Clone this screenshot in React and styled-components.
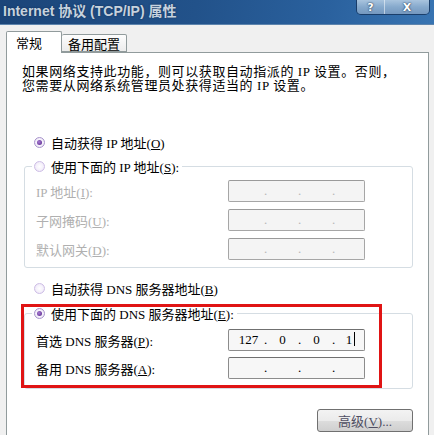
import React from 'react';
import styled, { createGlobalStyle } from 'styled-components';

const GlobalStyle = createGlobalStyle`
  html, body {
    margin: 0;
    padding: 0;
    background: #f0f0f0;
  }
`;

const Window = styled.div`
  width: 434px;
  height: 435px;
  overflow: hidden;
  display: flex;
  flex-direction: column;
  background: #f0f0f0;
  font-family: "Liberation Serif", "Noto Sans CJK SC", serif;
  font-size: 13px;
  color: #000;
`;

const TitleBar = styled.div`
  height: 24px;
  flex: none;
  display: flex;
  align-items: flex-start;
  padding: 0 4px 0 3px;
  background: linear-gradient(100deg, #1b4579 0%, #22528a 45%, #2a619e 75%, #3874b2 100%);
  border-bottom: 1px solid #5d84ad;
`;

const Title = styled.div`
  line-height: 22px;
  font-family: "Liberation Sans", "Noto Sans CJK SC", sans-serif;
  font-weight: bold;
  font-size: 14px;
  color: #c6d2de;
  text-shadow: 0 0 2px rgba(10, 30, 60, 0.6);
  white-space: nowrap;
`;

const CaptionButtons = styled.div`
  margin-left: auto;
  display: flex;
  height: 14px;
  border: 1px solid rgba(20, 50, 90, 0.8);
  border-top: none;
  border-radius: 0 0 5px 5px;
  overflow: hidden;
`;

const CaptionButton = styled.div`
  width: ${p => p.$wide ? 44 : 27}px;
  display: flex;
  align-items: center;
  justify-content: center;
  background: linear-gradient(180deg, #a9c4de 0%, #86a9cc 50%, #7598bf 100%);
  border-left: ${p => p.$wide ? '1px solid rgba(255,255,255,0.5)' : 'none'};
  font-family: "DejaVu Sans", sans-serif;
  font-weight: bold;
  font-size: 11px;
  color: #fff;
  text-shadow: 0 0 2px #2a3f5a, 0 0 1px #2a3f5a;
`;

const Body = styled.div`
  flex: 1;
  display: flex;
  flex-direction: column;
  padding: 6px 5px 0 6px;
  min-height: 0;
`;

const TabStrip = styled.div`
  display: flex;
  align-items: flex-end;
  height: 21px;
  position: relative;
  z-index: 1;
`;

const Tab = styled.div`
  box-sizing: border-box;
  width: ${p => p.$width}px;
  height: ${p => p.$active ? 22 : 18}px;
  margin-bottom: ${p => p.$active ? -1 : 0}px;
  padding-left: ${p => p.$active ? 9 : 6}px;
  display: flex;
  align-items: center;
  border: 1px solid #919b9c;
  border-bottom: ${p => p.$active ? 'none' : '1px solid #919b9c'};
  border-left: ${p => p.$active ? '1px solid #919b9c' : 'none'};
  border-radius: 2px 2px 0 0;
  background: ${p => p.$active ? '#fff' : 'linear-gradient(180deg, #fdfdfd 0%, #ececec 100%)'};
  font-family: "Noto Sans CJK SC", sans-serif;
  font-size: 13px;
`;

const Panel = styled.div`
  flex: 1;
  background: #fff;
  border: 1px solid #919b9c;
  padding: 12px 15px 20px 17px;
  display: flex;
  flex-direction: column;
`;

const Intro = styled.p`
  margin: 0 0 0 -2px;
  line-height: 14px;
  letter-spacing: 0.6px;
  white-space: nowrap;
`;

const RadioRow = styled.div`
  display: flex;
  align-items: center;
  gap: 6px;
  height: 16px;
  margin-top: ${p => p.$top || 0}px;
  padding-left: 10px;
  color: ${p => p.$disabled ? '#a8a8a8' : '#000'};
`;

const Radio = styled.span`
  box-sizing: border-box;
  width: 11px;
  height: 11px;
  border-radius: 50%;
  border: 1px solid ${p => p.$checked ? '#a894cc' : '#cdbde6'};
  background: radial-gradient(circle at 50% 50%, #ffffff 0%, #f4effa 60%, #e2d8f0 100%);
  display: flex;
  align-items: center;
  justify-content: center;

  &::after {
    content: '';
    width: 5px;
    height: 5px;
    border-radius: 50%;
    background: radial-gradient(circle at 40% 40%, #a87ad4 0%, #6b3c9c 70%, #4e2778 100%);
    display: ${p => p.$checked ? 'block' : 'none'};
  }
`;

const GroupWrap = styled.div`
  position: relative;
  margin-top: ${p => p.$top}px;
`;

const GroupBox = styled.div`
  border: 1px solid #d5dde3;
  border-radius: 3px;
  padding: 0 0 ${p => p.$bottom}px 11px;
`;

const Legend = styled(RadioRow)`
  width: fit-content;
  margin: -9px 0 0 -4px;
  padding: 0 3px 0 2px;
  background: #fff;
`;

const Rows = styled.div`
  display: grid;
  grid-template-columns: 192px 137px;
  row-gap: ${p => p.$gap}px;
  margin-top: ${p => p.$top}px;
  align-items: center;
`;

const FieldLabel = styled.span`
  color: ${p => p.$disabled ? '#b0b0b0' : '#000'};
  white-space: nowrap;
`;

const IpBox = styled.div`
  box-sizing: border-box;
  width: 137px;
  height: 22px;
  padding-left: 5px;
  border: 1px solid ${p => p.$disabled ? '#a6a6a6' : '#8c8c8c'};
  border-top-color: ${p => p.$disabled ? '#9a9a9a' : '#707070'};
  border-radius: 2px;
  background: ${p => p.$disabled ? '#f4f4f4' : '#f7f7f7'};
  display: grid;
  grid-template-columns: 29px 5px 29px 5px 29px 5px 29px;
  align-items: center;
  font-family: "Liberation Serif", serif;
  font-size: 13px;
`;

const Octet = styled.span`
  text-align: center;
  line-height: 20px;

  &::after {
    content: '';
    display: ${p => p.$caret ? 'inline-block' : 'none'};
    width: 1px;
    height: 14px;
    margin-left: 2px;
    background: #000;
    vertical-align: -2px;
  }
`;

const Dot = styled.span`
  text-align: center;
  line-height: 20px;
  color: ${p => p.$disabled ? '#b8b8b8' : '#000'};
`;

const Highlight = styled.div`
  position: absolute;
  top: -9px;
  left: -3px;
  width: 361px;
  height: 84px;
  box-sizing: border-box;
  border: 3px solid #e01414;
  pointer-events: none;
`;

const Footer = styled.div`
  display: flex;
  justify-content: flex-end;
  margin-top: 20px;
`;

const Button = styled.button`
  width: 96px;
  height: 23px;
  border: 1px solid #707070;
  border-radius: 3px;
  background: linear-gradient(180deg, #f3f3f3 0%, #ebebeb 50%, #dddddd 51%, #cfcfcf 100%);
  font-family: "Liberation Serif", "Noto Sans CJK SC", serif;
  font-size: 13px;
  color: #4e4e62;
  padding: 0;
`;

const IpField = ({ values = ['', '', '', ''], disabled, caret }) => (
  <IpBox $disabled={disabled}>
    {values.map((v, i) => (
      <React.Fragment key={i}>
        {i > 0 && <Dot $disabled={disabled}>.</Dot>}
        <Octet $caret={caret && i === 3}>{v}</Octet>
      </React.Fragment>
    ))}
  </IpBox>
);

const App = () => {
  return (
    <Window>
      <GlobalStyle />
      <TitleBar>
        <Title>Internet 协议 (TCP/IP) 属性</Title>
        <CaptionButtons>
          <CaptionButton>?</CaptionButton>
          <CaptionButton $wide>X</CaptionButton>
        </CaptionButtons>
      </TitleBar>
      <Body>
        <TabStrip>
          <Tab $active $width={56}>常规</Tab>
          <Tab $width={65}>备用配置</Tab>
        </TabStrip>
        <Panel>
          <Intro>
            如果网络支持此功能，则可以获取自动指派的 IP 设置。否则，<br />
            您需要从网络系统管理员处获得适当的 IP 设置。
          </Intro>

          <RadioRow $top={41}>
            <Radio $checked />
            <span>自动获得 IP 地址(<u>O</u>)</span>
          </RadioRow>

          <GroupWrap $top={16}>
            <GroupBox $bottom={7}>
              <Legend>
                <Radio />
                <span>使用下面的 IP 地址(<u>S</u>):</span>
              </Legend>
              <Rows $top={6} $gap={7}>
                <FieldLabel $disabled>IP 地址(<u>I</u>):</FieldLabel>
                <IpField disabled />
                <FieldLabel $disabled>子网掩码(<u>U</u>):</FieldLabel>
                <IpField disabled />
                <FieldLabel $disabled>默认网关(<u>D</u>):</FieldLabel>
                <IpField disabled />
              </Rows>
            </GroupBox>
          </GroupWrap>

          <RadioRow $top={12}>
            <Radio />
            <span>自动获得 DNS 服务器地址(<u>B</u>)</span>
          </RadioRow>

          <GroupWrap $top={17}>
            <GroupBox $bottom={9}>
              <Legend>
                <Radio $checked />
                <span>使用下面的 DNS 服务器地址(<u>E</u>):</span>
              </Legend>
              <Rows $top={8} $gap={6}>
                <FieldLabel>首选 DNS 服务器(<u>P</u>):</FieldLabel>
                <IpField values={['127', '0', '0', '1']} caret />
                <FieldLabel>备用 DNS 服务器(<u>A</u>):</FieldLabel>
                <IpField />
              </Rows>
            </GroupBox>
            <Highlight />
          </GroupWrap>

          <Footer>
            <Button>高级(<u>V</u>)...</Button>
          </Footer>
        </Panel>
      </Body>
    </Window>
  );
};

export default App;
